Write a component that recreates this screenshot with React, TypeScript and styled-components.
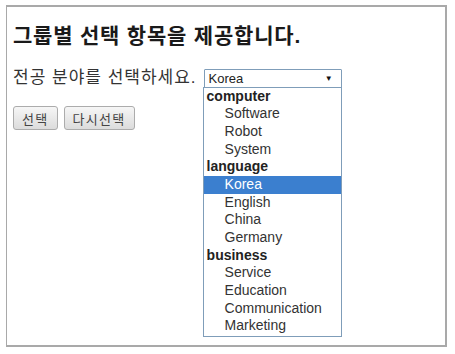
import styled, { createGlobalStyle } from 'styled-components';

const GlobalStyle = createGlobalStyle`
    body {
        margin: 0;
        background: #fff;
        font-family: "Liberation Sans", "Noto Sans CJK KR", sans-serif;
        color: #222;
    }
`;

type Group = { label: string; options: string[] };

const groups: Group[] = [
    { label: 'computer', options: ['Software', 'Robot', 'System'] },
    { label: 'language', options: ['Korea', 'English', 'China', 'Germany'] },
    { label: 'business', options: ['Service', 'Education', 'Communication', 'Marketing'] },
];

const selected = 'Korea';

function App() {
    return (
        <>
            <GlobalStyle />
            <Frame>
                <Title>그룹별 선택 항목을 제공합니다.</Title>
                <FieldRow>
                    <Label>전공 분야를 선택하세요.</Label>
                    <SelectWrap>
                        <SelectBox>
                            <span>{selected}</span>
                            <Arrow>▼</Arrow>
                        </SelectBox>
                        <DropList>
                            {groups.map((group) => (
                                <div key={group.label}>
                                    <GroupLabel>{group.label}</GroupLabel>
                                    {group.options.map((opt) => (
                                        <OptionRow key={opt} $active={opt === selected}>
                                            {opt}
                                        </OptionRow>
                                    ))}
                                </div>
                            ))}
                        </DropList>
                    </SelectWrap>
                </FieldRow>
                <ButtonRow>
                    <Button>선택</Button>
                    <Button>다시선택</Button>
                </ButtonRow>
            </Frame>
        </>
    );
}

const Frame = styled.div`
    box-sizing: border-box;
    margin: 5px 0 0 6px;
    width: 441px;
    height: 342px;
    border: 2px solid #a9a9a9;
    border-left-width: 1px;
    padding: 17px 0 0 6px;
`;

const Title = styled.h1`
    margin: 0;
    font-size: 21px;
    font-weight: bold;
    letter-spacing: 0.8px;
    line-height: 24px;
    color: #1a1a1a;
`;

const FieldRow = styled.div`
    display: flex;
    align-items: center;
    margin-top: 20px;
`;

const Label = styled.span`
    font-size: 17px;
    letter-spacing: 1px;
    line-height: 20px;
    color: #333;
`;

const SelectWrap = styled.div`
    position: relative;
    margin-left: 7px;
`;

const SelectBox = styled.div`
    box-sizing: border-box;
    display: flex;
    align-items: center;
    justify-content: space-between;
    width: 138px;
    height: 19px;
    padding: 0 8px 0 4px;
    border: 1px solid #7f9db9;
    border-radius: 1px;
    font-size: 13px;
    color: #222;
    background: #fff;
`;

const Arrow = styled.span`
    font-size: 8px;
    color: #111;
`;

const DropList = styled.div`
    position: absolute;
    top: 18px;
    left: -1px;
    box-sizing: border-box;
    width: 139px;
    border: 1px solid #7f9db9;
    background: #fff;
    padding-bottom: 1px;
`;

const GroupLabel = styled.div`
    height: 17.7px;
    line-height: 17.7px;
    padding-left: 3px;
    font-size: 14px;
    font-weight: bold;
    color: #222;
`;

const OptionRow = styled.div<{ $active?: boolean }>`
    height: 17.7px;
    line-height: 17.7px;
    padding-left: 21px;
    font-size: 14px;
    color: ${(p) => (p.$active ? '#fff' : '#333')};
    background: ${(p) => (p.$active ? '#3b7fcf' : 'transparent')};
`;

const ButtonRow = styled.div`
    display: flex;
    gap: 6px;
    margin-top: 18px;
`;

const Button = styled.button`
    box-sizing: border-box;
    height: 24px;
    padding: 0 8px;
    font-family: "Liberation Sans", "Noto Sans CJK KR", sans-serif;
    font-size: 13px;
    letter-spacing: 1.3px;
    color: #444;
    background: linear-gradient(#f6f6f6, #dcdcdc);
    border: 1px solid #acacac;
    border-radius: 3px;
`;

export default App;
